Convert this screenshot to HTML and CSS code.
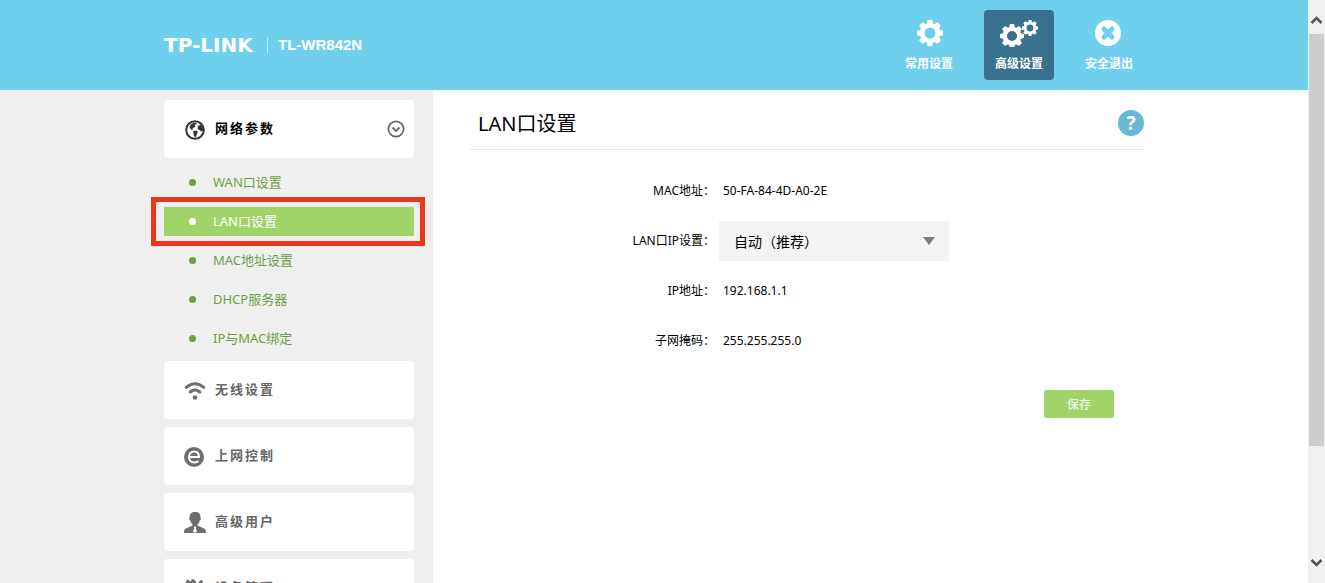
FILE: index.html
```html
<!DOCTYPE html>
<html lang="zh-CN">
<head>
    <meta charset="UTF-8">
    <title>TL-WR842N</title>
    <link rel="stylesheet" href="styles.css">
</head>
<body>
<!-- shared shape for the gear icons -->
<svg class="defs" aria-hidden="true">
    <symbol id="gear" viewBox="-13 -13 26 26">
        <g fill="currentColor">
            <path id="tooth" d="M-3.2 -9 L-2.3 -13 H2.3 L3.2 -9 Z"/>
            <use href="#tooth" transform="rotate(45)"/>
            <use href="#tooth" transform="rotate(90)"/>
            <use href="#tooth" transform="rotate(135)"/>
            <use href="#tooth" transform="rotate(180)"/>
            <use href="#tooth" transform="rotate(225)"/>
            <use href="#tooth" transform="rotate(270)"/>
            <use href="#tooth" transform="rotate(315)"/>
        </g>
        <circle r="7.8" fill="none" stroke="currentColor" stroke-width="4.6"/>
    </symbol>
</svg>
<div class="page">
    <header class="header">
        <div class="header-inner">
            <div class="brand">
                <span class="logo">TP-LINK</span>
                <span class="model">TL-WR842N</span>
            </div>
            <nav class="top-nav">
                <a href="#" class="top-link">
                    <svg width="28" height="28" viewBox="0 0 28 28"><use href="#gear" x="2" y="1" width="26" height="26"/></svg>
                    <span>常用设置</span>
                </a>
                <a href="#" class="top-link active">
                    <svg width="40" height="28" viewBox="0 0 40 28"><use href="#gear" x="1" y="5" width="24" height="24"/><use href="#gear" x="23" y="1" width="16" height="16"/></svg>
                    <span>高级设置</span>
                </a>
                <a href="#" class="top-link">
                    <svg width="28" height="28" viewBox="0 0 28 28"><circle cx="13" cy="14" r="13" fill="#fff"/><path d="M9 10l8 8M17 10l-8 8" stroke="#6fd0ee" stroke-width="5" stroke-linecap="round"/></svg>
                    <span>安全退出</span>
                </a>
            </nav>
        </div>
    </header>

    <div class="main">
        <aside class="sidebar">
            <nav class="menu">
                <a href="#" class="menu-item current">
                    <svg width="22" height="22" viewBox="0 0 22 22"><circle cx="11" cy="12" r="8.800" fill="none" stroke="#333" stroke-width="2"/><path d="M5.500 9L7 6l4-1.500 2 1-2.500 1.500 1 1.500-3 2 .500 1.500-2-.500zM9 13l3-.500 2 1.500-1 2-1.500 3.500-1.500-1.500-.500-3zM14 8l3-1.500 2 4v2l-2 1-1.500-1.500-2-1z" fill="#333"/></svg>
                    <span>网络参数</span>
                    <svg class="arrow" width="18" height="18" viewBox="0 0 18 18" fill="none" stroke="#666"><circle cx="9" cy="9" r="7.700" stroke-width="1.700"/><path d="M5.500 7.500L9 11l3.500-3.500" stroke-width="1.800"/></svg>
                </a>
                <ul class="submenu">
                    <li><a href="#">WAN口设置</a></li>
                    <li class="selected"><a href="#">LAN口设置</a></li>
                    <li><a href="#">MAC地址设置</a></li>
                    <li><a href="#">DHCP服务器</a></li>
                    <li><a href="#">IP与MAC绑定</a></li>
                </ul>
                <a href="#" class="menu-item">
                    <svg width="22" height="22" viewBox="0 0 22 22" fill="none" stroke="#6e6e6e" stroke-width="3" stroke-linecap="round"><path d="M2.300 8.300Q11 1.200 19.700 8.300M6.200 13Q11 9 15.800 13"/><circle cx="11" cy="18.500" r="2.300" fill="#6e6e6e" stroke="none"/></svg>
                    <span>无线设置</span>
                </a>
                <a href="#" class="menu-item">
                    <svg width="22" height="22" viewBox="0 0 22 22"><circle cx="10" cy="12" r="10" fill="#6e6e6e"/><path d="M5.500 12h9.500c0-3.500-1.800-5.500-4.800-5.500s-5.200 2.200-5.200 5.500 2.200 5.500 5.400 5.500c1.600 0 2.900-.400 4-1.200" fill="none" stroke="#fff" stroke-width="2"/></svg>
                    <span>上网控制</span>
                </a>
                <a href="#" class="menu-item">
                    <svg width="22" height="22" viewBox="0 0 22 22"><path d="M11 1c3.800 0 5.600 2 5.400 5.500 1 .500.500 2.700-.600 3-.400 2-1.300 3-2.300 3.800v1.200l6.500 3c1.500.700 2 2 2 4.500H0c0-2.500.500-3.800 2-4.500l6.500-3v-1.200C7.500 12.500 6.600 11.500 6.200 9.500c-1.100-.300-1.600-2.500-.600-3C5.400 3 7.200 1 11 1z" fill="#6e6e6e"/><path d="M9.800 15.500h2.400l-.500 1.500 1.300 3.500-2 1.500-2-1.500 1.300-3.500z" fill="#fff"/></svg>
                    <span>高级用户</span>
                </a>
                <a href="#" class="menu-item">
                    <svg width="22" height="22" viewBox="0 0 22 22"><path d="M3 2.500l4 2 .500-2.500c3 0 5 2 4.500 5l8 10-4 4-9-9c-4 1-6-2-6-5zM16 3.500l2-.500 1 3-4 4-2-2z" fill="#6e6e6e"/></svg>
                    <span>设备管理</span>
                </a>
            </nav>
        </aside>

        <main class="content">
            <div class="title-bar">
                <h1>LAN口设置</h1>
                <button type="button" class="help" aria-label="帮助">?</button>
            </div>
            <form class="lan-form">
                <div class="row">
                    <span class="label">MAC地址：</span>
                    <span class="value">50-FA-84-4D-A0-2E</span>
                </div>
                <div class="row">
                    <label class="label" for="ipMode">LAN口IP设置：</label>
                    <div class="select-box">
                        <select id="ipMode">
                            <option>自动（推荐）</option>
                            <option>手动</option>
                        </select>
                    </div>
                </div>
                <div class="row">
                    <span class="label">IP地址：</span>
                    <span class="value">192.168.1.1</span>
                </div>
                <div class="row">
                    <span class="label">子网掩码：</span>
                    <span class="value">255.255.255.0</span>
                </div>
                <div class="actions">
                    <button type="button" class="save">保存</button>
                </div>
            </form>
        </main>
    </div>
</div>

<div class="scrollbar">
    <button type="button" class="scroll-btn" aria-label="向上"><svg width="13" height="10" viewBox="0 0 13 10"><path d="M1.500 8L6.500 3l5 5" fill="none" stroke="#555" stroke-width="2.600"/></svg></button>
    <div class="track"><div class="thumb"></div></div>
    <button type="button" class="scroll-btn" aria-label="向下"><svg width="13" height="10" viewBox="0 0 13 10"><path d="M1.500 2L6.500 7l5-5" fill="none" stroke="#555" stroke-width="2.600"/></svg></button>
</div>
</body>
</html>
```
FILE: styles.css
```css
* {
    box-sizing: border-box;
}
body {
    margin: 0;
    display: flex;
    height: 100vh;
    overflow: hidden;
    background: #fff;
    color: #000;
    font-family: "Noto Sans", "Noto Sans CJK SC", sans-serif;
    font-size: 12px;
}
a {
    color: inherit;
    text-decoration: none;
}
button, select {
    font-family: inherit;
    border: 0;
    padding: 0;
}
.defs {
    position: absolute;
    width: 0;
    height: 0;
}
.page {
    flex: 1;
    display: flex;
    flex-direction: column;
    min-width: 0;
}

/* header */
.header {
    flex: none;
    height: 90px;
    background: #6fd0ee;
    color: #fff;
}
.header-inner {
    display: flex;
    justify-content: space-between;
    max-width: 980px;
    margin: 0 auto;
    padding: 10px 0;
}
.brand {
    display: flex;
    align-items: center;
    font-weight: bold;
}
.logo {
    width: 103px;
    font-family: "DejaVu Sans", sans-serif;
    font-size: 20px;
    line-height: 16px;
}
.model {
    padding-left: 10px;
    border-left: 1px solid #c5ecf9;
    font-family: "Liberation Sans", sans-serif;
    font-size: 15px;
    line-height: 16px;
}
.top-nav {
    display: flex;
    gap: 20px;
}
.top-link {
    display: flex;
    flex-direction: column;
    align-items: center;
    gap: 8px;
    width: 70px;
    height: 70px;
    padding-top: 9px;
    border-radius: 4px;
    font-weight: bold;
    line-height: 18px;
}
.top-link.active {
    background: #39728f;
}

/* left menu */
.main {
    flex: 1;
    display: flex;
    min-height: 0;
}
.sidebar {
    width: calc(50% - 221px);
    padding: 10px 19px 0 0;
    background: #efefef;
    overflow: hidden;
}
.menu {
    display: flex;
    flex-direction: column;
    gap: 8px;
    width: 250px;
    margin-left: auto;
}
.menu-item {
    display: flex;
    align-items: center;
    gap: 9px;
    height: 58px;
    padding: 0 9px 0 20px;
    border-radius: 4px;
    background: #fff;
    color: #666;
    font-size: 13px;
    font-weight: bold;
    letter-spacing: 2px;
}
.menu-item span {
    padding-bottom: 3px;
}
.menu-item.current {
    color: #000;
}
.arrow {
    margin-left: auto;
}
.submenu {
    display: flex;
    flex-direction: column;
    gap: 10px;
    margin: 0;
    padding: 2px 0 0;
    list-style: none;
    color: #6f9f44;
    font-size: 13px;
    line-height: 29px;
}
.submenu li {
    position: relative;
    display: flex;
    align-items: center;
    gap: 17px;
    padding-left: 25px;
}
.submenu li::before {
    content: "";
    width: 7px;
    height: 7px;
    border-radius: 50%;
    background: currentColor;
}
.submenu .selected {
    background: #a0d468;
    color: #fff;
}
.submenu .selected::after {
    content: "";
    position: absolute;
    inset: -10px -11px -10px -13px;
    border: 5px solid #e8391b;
}

/* content */
.content {
    flex: 1;
    padding-left: 37px;
}
.title-bar {
    display: flex;
    align-items: center;
    justify-content: space-between;
    max-width: 674px;
    height: 60px;
    padding: 6px 0 0 8px;
    border-bottom: 1px solid #e6e6e6;
}
h1 {
    margin: 0;
    font-size: 20px;
    font-weight: normal;
}
.help {
    width: 26px;
    height: 26px;
    border-radius: 50%;
    background: #68b9d6;
    color: #fff;
    font-size: 19px;
    font-weight: bold;
    line-height: 26px;
}
.lan-form {
    max-width: 674px;
    padding: 16px 30px 0 0;
}
.row {
    display: flex;
    align-items: center;
    height: 50px;
}
.label, .value {
    padding-bottom: 2px;
}
.label {
    width: 245px;
    text-align: right;
}
.value {
    padding-left: 8px;
}
.select-box {
    position: relative;
    width: 230px;
    margin-left: 4px;
}
.select-box::after {
    content: "";
    position: absolute;
    top: 16px;
    right: 14px;
    border: 6px solid transparent;
    border-top: 8px solid #7b7b7b;
    border-bottom: 0;
    pointer-events: none;
}
select {
    appearance: none;
    width: 100%;
    height: 40px;
    padding-left: 15px;
    background: #f3f3f3;
    color: #000;
    font-size: 14px;
}
.actions {
    display: flex;
    justify-content: flex-end;
    padding-top: 24px;
}
.save {
    width: 70px;
    height: 28px;
    border-radius: 3px;
    background: #a0d468;
    color: #fff;
    font-size: 12px;
}

/* scrollbar */
.scrollbar {
    display: flex;
    flex-direction: column;
    width: 17px;
    padding: 6px 1px;
    background: #f0f0f0;
}
.scroll-btn {
    height: 28px;
    background: none;
}
.track {
    flex: 1;
}
.thumb {
    height: 80%;
    background: #cdcdcd;
}
```
